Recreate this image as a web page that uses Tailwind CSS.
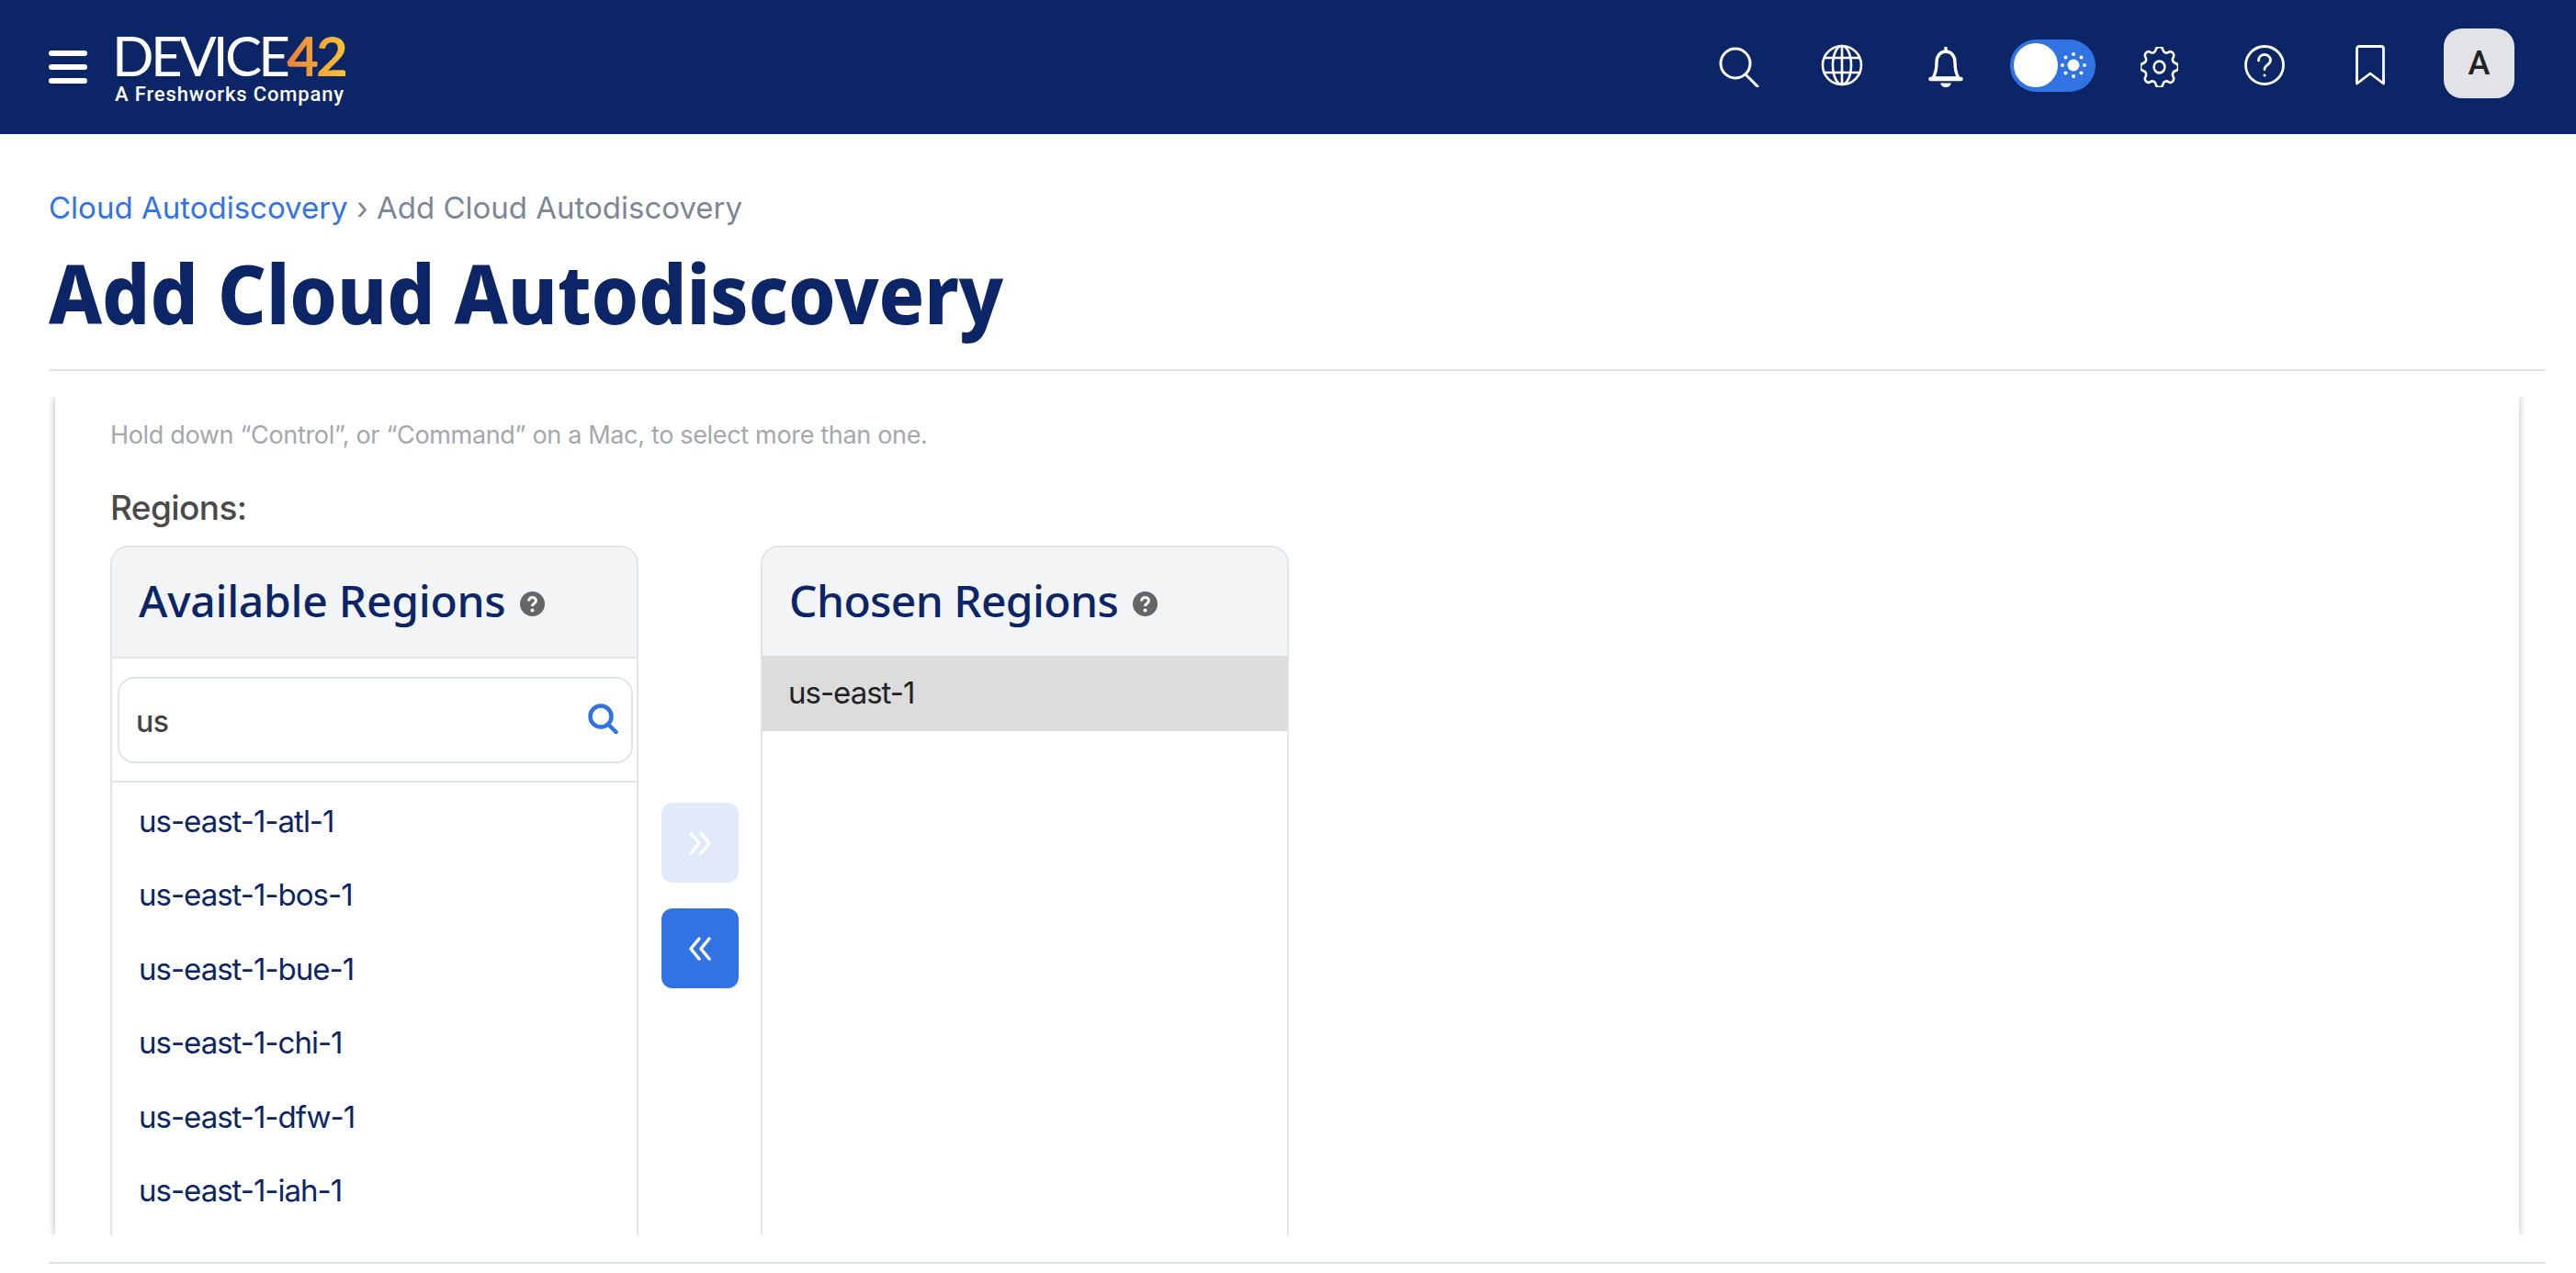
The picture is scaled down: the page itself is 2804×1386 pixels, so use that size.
<!DOCTYPE html>
<html lang="en">
<head>
    <meta charset="UTF-8">
    <title>Add Cloud Autodiscovery - Device42</title>
    <script src="https://cdn.jsdelivr.net/npm/@tailwindcss/browser@4"></script>
</head>
<body class="bg-white h-[1386px] overflow-hidden font-['Inter',sans-serif]">
    <!-- Top bar -->
    <header class="h-[146px] bg-[#0b2566] flex items-center pl-[53px] pr-[67px] text-white">
        <div class="w-[42px] flex flex-col gap-[9px]">
            <span class="h-[6px] rounded-full bg-white"></span>
            <span class="h-[6px] rounded-full bg-white"></span>
            <span class="h-[6px] rounded-full bg-white"></span>
        </div>
        <div class="ml-[30px] flex flex-col pt-[6px]">
            <div class="h-[48px] flex items-center font-['Lato',sans-serif] text-[60px] leading-[48px] -ml-[3px]">
                <span class="tracking-[-3.700px]">DEVICE</span><span class="font-bold tracking-[-3px] text-transparent bg-clip-text bg-gradient-to-r from-[#e8803a] to-[#f7c236]">42</span>
            </div>
            <div class="mt-[6px] font-['Roboto',sans-serif] font-medium text-[22px] leading-[26px] tracking-[0.850px]">A Freshworks Company</div>
        </div>
        <div class="ml-auto flex items-center">
            <!-- search -->
            <svg class="w-[44px] h-[44px]" viewBox="0 0 44 44" fill="none" stroke="currentColor" stroke-width="3"><circle cx="18" cy="18" r="16"/><path stroke-linecap="round" d="M29 30l13 13"/></svg>
            <!-- globe -->
            <svg class="ml-[67px] mb-[5px] w-[46px] h-[46px]" viewBox="0 0 46 46" fill="none" stroke="currentColor" stroke-width="2.600"><circle cx="23" cy="23" r="21"/><ellipse cx="23" cy="23" rx="10" ry="21"/><path d="M23 2v42M3.500 15h39M3.500 31h39"/></svg>
            <!-- bell -->
            <svg class="ml-[70px] w-[40px] h-[44px]" viewBox="0 0 40 44" fill="none" stroke="currentColor" stroke-width="3.400"><path stroke-linejoin="round" d="M20 5c-6 0-10 5-10 12 0 8-1 12-4 17h28c-3-5-4-9-4-17 0-7-4-12-10-12z"/><path stroke-linecap="round" d="M20 1v4"/><path stroke-linecap="round" stroke-width="4.500" d="M3.500 35h33"/><path fill="currentColor" stroke="none" d="M14 39.500h12c-1 3-3 4.500-6 4.500s-5-1.500-6-4.500z"/></svg>
            <!-- theme toggle -->
            <div class="ml-[50px] mb-[3px] relative w-[93px] h-[57px] rounded-full bg-[#3173e3]">
                <span class="absolute left-[4px] top-[4px] w-[48px] h-[48px] rounded-full bg-white"></span>
                <svg class="absolute left-[55px] top-[14px] w-[28px] h-[28px]" viewBox="0 0 28 28" fill="white"><circle cx="14" cy="14" r="6.500"/><circle cx="14" cy="2" r="2"/><circle cx="14" cy="26" r="2"/><circle cx="2" cy="14" r="2"/><circle cx="26" cy="14" r="2"/><circle cx="5.500" cy="5.500" r="2"/><circle cx="22.500" cy="5.500" r="2"/><circle cx="5.500" cy="22.500" r="2"/><circle cx="22.500" cy="22.500" r="2"/></svg>
            </div>
            <!-- gear -->
            <svg class="ml-[49px] w-[41px] h-[44px]" viewBox="3 3 18 18" preserveAspectRatio="none" fill="none" stroke="currentColor" stroke-width="1.100" stroke-linecap="round" stroke-linejoin="round"><path d="M10.300 4.300c.4-1.800 3-1.800 3.400 0a1.700 1.700 0 0 0 2.600 1.100c1.500-.9 3.300.8 2.300 2.300a1.700 1.700 0 0 0 1.100 2.600c1.800.4 1.800 3 0 3.400a1.700 1.700 0 0 0-1.100 2.600c.9 1.500-.8 3.300-2.300 2.300a1.700 1.700 0 0 0-2.600 1.100c-.4 1.800-3 1.800-3.400 0a1.700 1.700 0 0 0-2.600-1.100c-1.500.9-3.300-.8-2.300-2.300a1.700 1.700 0 0 0-1.100-2.600c-1.800-.4-1.800-3 0-3.400a1.700 1.700 0 0 0 1.100-2.600c-.9-1.500.8-3.300 2.300-2.300 1 .6 2.300.1 2.600-1.100z"/><circle cx="12" cy="12" r="2.600"/></svg>
            <!-- help -->
            <svg class="ml-[72px] mb-[5px] w-[44px] h-[44px]" viewBox="0 0 44 44" fill="none" stroke="currentColor" stroke-width="2.800" stroke-linecap="round"><circle cx="22" cy="22" r="20.500"/><path d="M15.500 17c0-4 3-6.500 6.500-6.500s6.500 2.500 6.500 6c0 5-6.500 5-6.500 10"/><circle cx="22" cy="33" r="1.500" fill="currentColor" stroke="none"/></svg>
            <!-- bookmark -->
            <svg class="ml-[77px] mb-[5px] w-[32px] h-[44px]" viewBox="0 0 32 44" fill="none" stroke="currentColor" stroke-width="2.800" stroke-linejoin="round"><path d="M1.500 4c0-1.500 1-2.500 2.500-2.500h24c1.500 0 2.500 1 2.500 2.500v38L16 31 1.500 42z"/></svg>
            <!-- avatar -->
            <div class="ml-[64px] mb-[8px] w-[77px] h-[76px] rounded-[20px] bg-[#e1e3e7] flex items-center justify-center font-['Roboto',sans-serif] font-medium text-[36px] text-[#222]">A</div>
        </div>
    </header>

    <main class="ml-[53px] w-[2718px]">
        <!-- Title -->
        <div class="pt-[60px] h-[258px] border-b-2 border-[#dfe3e8]">
            <p class="text-[33px] leading-[40px] text-[#7b8794]">
                <a class="text-[#3173e3]">Cloud Autodiscovery</a> › Add Cloud Autodiscovery
            </p>
            <h1 class="mt-[17px] origin-left scale-x-[0.912] font-['Noto_Sans',sans-serif] font-extrabold text-[90px] leading-[110px] text-[#0b2566] whitespace-nowrap">Add Cloud Autodiscovery</h1>
        </div>

        <!-- Form box -->
        <section class="mt-[28px] ml-[7px] w-[2682px] h-[913px] pl-[60px] pt-[22px] shadow-[0_0_8px_#b5b5b5] [clip-path:inset(0_-12px)] overflow-hidden">
            <p class="text-[27px] leading-[40px] tracking-[-0.330px] text-[#a3a8ae]">Hold down “Control”, or “Command” on a Mac, to select more than one.</p>
            <label class="block mt-[34px] text-[37px] leading-[50px] tracking-[-0.600px] font-medium text-[#4a4a4a]">Regions:</label>

            <div class="mt-[16px] flex items-start">
                <!-- Available -->
                <div class="w-[575px] h-[800px] border-2 border-[#e1e4e8] rounded-t-[20px] shrink-0">
                    <div class="h-[121px] bg-[#f3f4f6] rounded-t-[18px] border-b-2 border-[#e1e4e8] pl-[29px] pb-[4px] flex items-center gap-[16px] font-['Noto_Sans',sans-serif] font-medium text-[48px] text-[#0b2566] tracking-[-0.250px]">
                        <span>Available Regions</span>
                        <svg class="w-[27px] h-[27px] mt-[8px]" viewBox="0 0 27 27"><circle cx="13.500" cy="13.500" r="13.500" fill="#666"/><path d="M9.500 10.500c0-2.500 2-4 4-4s4 1.500 4 3.500c0 3-4 3-4 6" fill="none" stroke="white" stroke-width="3"/><circle cx="13.500" cy="20.500" r="2" fill="white"/></svg>
                    </div>
                    <div class="h-[135px] border-b-2 border-[#e1e4e8] pl-[6px] pr-[4px] pt-[20px]">
                        <div class="h-[94px] border-2 border-[#e1e4e8] rounded-[18px] pl-[18px] pr-[14px] flex items-center justify-between">
                            <span class="text-[32px] font-medium tracking-[-0.500px] text-[#444] mt-[4px]">us</span>
                            <svg class="w-[33px] h-[33px] mb-[4px]" viewBox="0 0 33 33" fill="none" stroke="#3173e3" stroke-width="4.500" stroke-linecap="round"><circle cx="14" cy="14" r="11.500"/><path d="M22.500 23l8 8"/></svg>
                        </div>
                    </div>
                    <ul class="pl-[29px] pt-[2px] text-[33px] tracking-[-1px] text-[#0b2566]">
                        <li class="h-[80.500px] flex items-center">us-east-1-atl-1</li>
                        <li class="h-[80.500px] flex items-center">us-east-1-bos-1</li>
                        <li class="h-[80.500px] flex items-center">us-east-1-bue-1</li>
                        <li class="h-[80.500px] flex items-center">us-east-1-chi-1</li>
                        <li class="h-[80.500px] flex items-center">us-east-1-dfw-1</li>
                        <li class="h-[80.500px] flex items-center">us-east-1-iah-1</li>
                    </ul>
                </div>

                <!-- Move buttons -->
                <div class="w-[133px] shrink-0 pt-[280px] flex flex-col items-center gap-[28px]">
                    <button class="w-[84px] h-[87px] rounded-[12px] bg-[#e1eafb] flex items-center justify-center">
                        <svg class="w-[26px] h-[26px]" viewBox="0 0 26 26" fill="none" stroke="white" stroke-width="3.500" stroke-linecap="round" stroke-linejoin="round"><path d="M3 2l9 11-9 11M14 2l9 11-9 11"/></svg>
                    </button>
                    <button class="w-[84px] h-[87px] rounded-[12px] bg-[#3173e3] flex items-center justify-center">
                        <svg class="w-[26px] h-[26px]" viewBox="0 0 26 26" fill="none" stroke="white" stroke-width="3.500" stroke-linecap="round" stroke-linejoin="round"><path d="M12 2L3 13l9 11M23 2l-9 11 9 11"/></svg>
                    </button>
                </div>

                <!-- Chosen -->
                <div class="w-[575px] h-[800px] border-2 border-[#e1e4e8] rounded-t-[20px] shrink-0">
                    <div class="h-[118px] bg-[#f3f4f6] rounded-t-[18px] pl-[29px] pb-[3px] flex items-center gap-[16px] font-['Noto_Sans',sans-serif] font-medium text-[48px] text-[#0b2566] tracking-[-0.600px]">
                        <span>Chosen Regions</span>
                        <svg class="w-[27px] h-[27px] mt-[8px]" viewBox="0 0 27 27"><circle cx="13.500" cy="13.500" r="13.500" fill="#666"/><path d="M9.500 10.500c0-2.500 2-4 4-4s4 1.500 4 3.500c0 3-4 3-4 6" fill="none" stroke="white" stroke-width="3"/><circle cx="13.500" cy="20.500" r="2" fill="white"/></svg>
                    </div>
                    <div class="h-[82px] bg-[#dcdcdc] pl-[28px] flex items-center text-[33px] tracking-[-1px] text-[#222]">us-east-1</div>
                </div>
            </div>
        </section>

        <div class="mt-[29px] h-[2px] bg-[#dfe3e8]"></div>
    </main>
</body>
</html>
